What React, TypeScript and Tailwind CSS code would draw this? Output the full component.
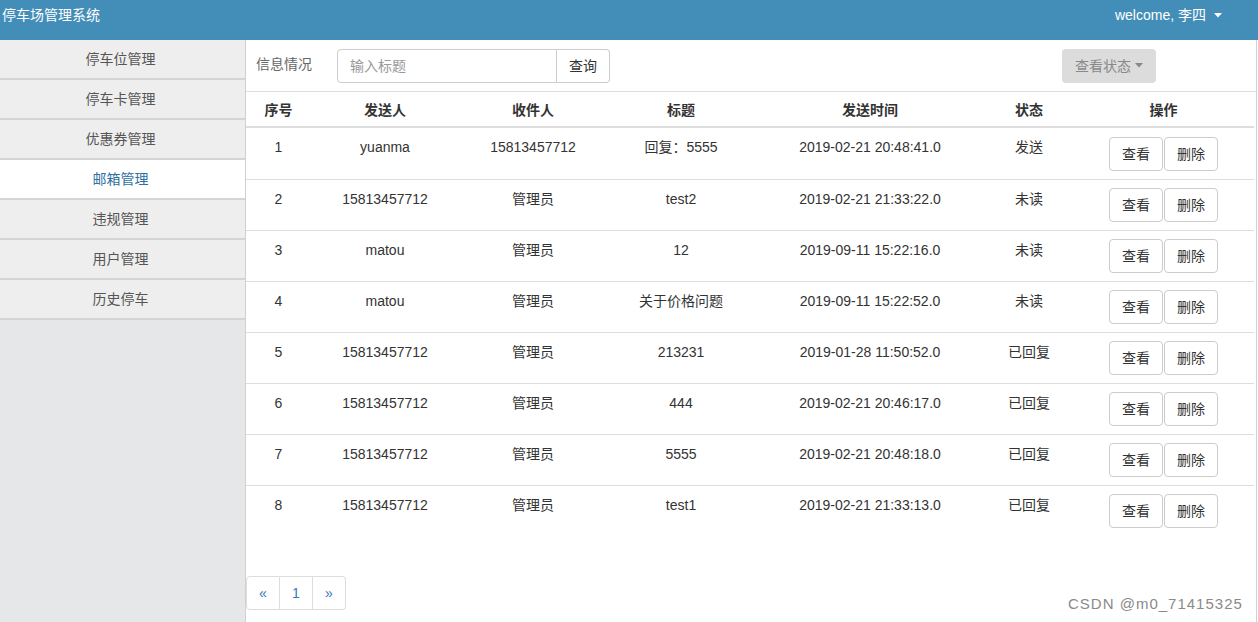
import React from "react";

const font = { fontFamily: '"Liberation Sans", "Noto Sans CJK SC", sans-serif' };

const menu = ["停车位管理", "停车卡管理", "优惠券管理", "邮箱管理", "违规管理", "用户管理", "历史停车"];

const rows = [
  ["1", "yuanma", "15813457712", "回复：5555", "2019-02-21 20:48:41.0", "发送"],
  ["2", "15813457712", "管理员", "test2", "2019-02-21 21:33:22.0", "未读"],
  ["3", "matou", "管理员", "12", "2019-09-11 15:22:16.0", "未读"],
  ["4", "matou", "管理员", "关于价格问题", "2019-09-11 15:22:52.0", "未读"],
  ["5", "15813457712", "管理员", "213231", "2019-01-28 11:50:52.0", "已回复"],
  ["6", "15813457712", "管理员", "444", "2019-02-21 20:46:17.0", "已回复"],
  ["7", "15813457712", "管理员", "5555", "2019-02-21 20:48:18.0", "已回复"],
  ["8", "15813457712", "管理员", "test1", "2019-02-21 21:33:13.0", "已回复"],
];

function Caret({ color }: { color: string }) {
  return (
    <svg width="8" height="5" viewBox="0 0 8 5" className="inline-block">
      <path d="M0 0 L8 0 L4 4.5 Z" fill={color} />
    </svg>
  );
}

export default function App() {
  return (
    <div className="relative w-[1258px] h-[622px] flex flex-col overflow-hidden text-[14px] text-[#333] leading-[20px] bg-white" style={font}>
      {/* header */}
      <div className="h-[40px] shrink-0 bg-[#438eb9] flex items-center pl-[2px] pr-[36px] text-white">
        <span className="text-[14px] -mt-[10px]">停车场管理系统</span>
        <span className="ml-auto flex items-center gap-[8px] -mt-[10px]">
          <span>welcome, 李四</span>
          <Caret color="#ffffff" />
        </span>
      </div>
      <div className="flex flex-1 min-h-0">
        {/* sidebar */}
        <div className="w-[245px] shrink-0 bg-[#e6e7e9] flex flex-col">
          {menu.map((m, i) => (
            <div
              key={m}
              className={
                "h-[40px] flex items-center justify-center pr-[4px] border-b-2 " +
                (i === 3
                  ? "bg-white text-[#2f6f9f] border-[#d4d4d4]"
                  : i === 6
                  ? "bg-[#eeeeee] text-[#555] border-[#d4d4d4] border-b"
                  : "bg-[#eeeeee] text-[#555] border-[#d4d4d4]")
              }
            >
              {m}
            </div>
          ))}
        </div>
        {/* main */}
        <div className="flex-1 border-l border-r border-[#d0d0d0] mr-[1px] flex flex-col">
          <div className="h-[52px] shrink-0 border-b border-[#dddddd] flex items-center pl-[10px]">
            <span className="text-[#666] -mt-[4px]">信息情况</span>
            <div className="ml-[25px] flex">
              <div className="w-[220px] h-[34px] border border-[#cccccc] rounded-l-[4px] flex items-center pl-[12px] text-[#999]">
                输入标题
              </div>
              <div className="h-[34px] w-[53px] border border-l-0 border-[#cccccc] rounded-r-[4px] flex items-center justify-center text-[#333]">
                查询
              </div>
            </div>
            <div className="ml-auto mr-[100px] h-[34px] w-[94px] bg-[#dcdcdc] rounded-[4px] flex items-center justify-center gap-[4px] text-[#888]">
              <span>查看状态</span>
              <Caret color="#888888" />
            </div>
          </div>
          <table className="table-fixed border-separate border-spacing-0 w-[1008px] text-center">
            <colgroup>
              <col className="w-[65px]" />
              <col className="w-[148px]" />
              <col className="w-[148px]" />
              <col className="w-[148px]" />
              <col className="w-[230px]" />
              <col className="w-[88px]" />
              <col className="w-[181px]" />
            </colgroup>
            <thead>
              <tr>
                {["序号", "发送人", "收件人", "标题", "发送时间", "状态", "操作"].map((h) => (
                  <th key={h} className="pt-[8px] pb-[6px] font-bold border-b-2 border-[#dddddd] text-[#333]">
                    {h}
                  </th>
                ))}
              </tr>
            </thead>
            <tbody>
              {rows.map((r, i) => (
                <tr key={r[0]}>
                  {r.map((c, j) => (
                    <td
                      key={j}
                      className={"align-top px-[4px] pt-[9px] pb-[8px] text-[#333] " + (i > 0 ? "border-t border-[#dddddd]" : "")}
                    >
                      {c}
                    </td>
                  ))}
                  <td className={"align-top pb-[8px] " + (i > 0 ? "pt-[8px] border-t border-[#dddddd]" : "pt-[9px]")}>
                    <div className="flex justify-center gap-[1px]">
                      <div className="h-[34px] w-[54px] border border-[#cccccc] rounded-[4px] flex items-center justify-center bg-white">查看</div>
                      <div className="h-[34px] w-[54px] border border-[#cccccc] rounded-[4px] flex items-center justify-center bg-white">删除</div>
                    </div>
                  </td>
                </tr>
              ))}
            </tbody>
          </table>
          <div className="mt-[40px] flex text-[#337ab7]">
            <div className="w-[34px] h-[34px] border border-[#dddddd] rounded-l-[4px] flex items-center justify-center">«</div>
            <div className="w-[33px] h-[34px] border border-l-0 border-[#dddddd] flex items-center justify-center">1</div>
            <div className="w-[33px] h-[34px] border border-l-0 border-[#dddddd] rounded-r-[4px] flex items-center justify-center">»</div>
          </div>
        </div>
      </div>
      {/* watermark */}
      <div className="absolute left-[1068px] top-[594px] text-[15px] tracking-[1px] text-[#8a8a8a] pointer-events-none whitespace-nowrap">
        CSDN @m0_71415325
      </div>
    </div>
  );
}
